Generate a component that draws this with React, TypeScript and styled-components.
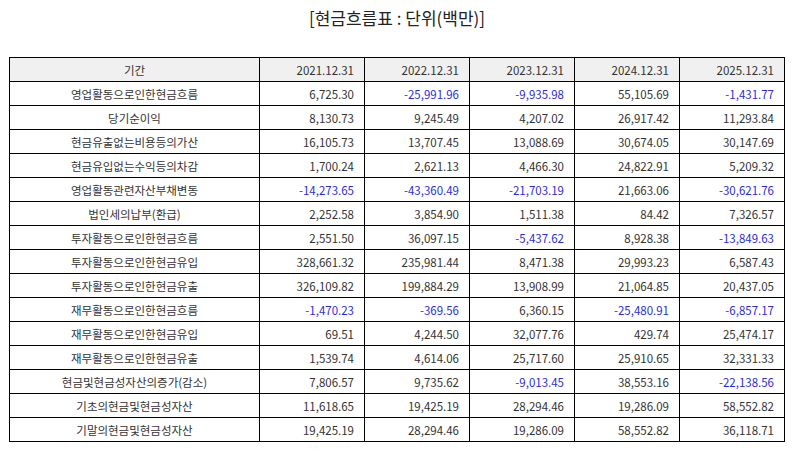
import { createGlobalStyle } from "styled-components";
import styled from "styled-components";

type Row = {
  label: string;
  values: number[];
};

const periods = ["2021.12.31", "2022.12.31", "2023.12.31", "2024.12.31", "2025.12.31"];

const rows: Row[] = [
  { label: "영업활동으로인한현금흐름", values: [6725.3, -25991.96, -9935.98, 55105.69, -1431.77] },
  { label: "당기순이익", values: [8130.73, 9245.49, 4207.02, 26917.42, 11293.84] },
  { label: "현금유출없는비용등의가산", values: [16105.73, 13707.45, 13088.69, 30674.05, 30147.69] },
  { label: "현금유입없는수익등의차감", values: [1700.24, 2621.13, 4466.3, 24822.91, 5209.32] },
  { label: "영업활동관련자산부채변동", values: [-14273.65, -43360.49, -21703.19, 21663.06, -30621.76] },
  { label: "법인세의납부(환급)", values: [2252.58, 3854.9, 1511.38, 84.42, 7326.57] },
  { label: "투자활동으로인한현금흐름", values: [2551.5, 36097.15, -5437.62, 8928.38, -13849.63] },
  { label: "투자활동으로인한현금유입", values: [328661.32, 235981.44, 8471.38, 29993.23, 6587.43] },
  { label: "투자활동으로인한현금유출", values: [326109.82, 199884.29, 13908.99, 21064.85, 20437.05] },
  { label: "재무활동으로인한현금흐름", values: [-1470.23, -369.56, 6360.15, -25480.91, -6857.17] },
  { label: "재무활동으로인한현금유입", values: [69.51, 4244.5, 32077.76, 429.74, 25474.17] },
  { label: "재무활동으로인한현금유출", values: [1539.74, 4614.06, 25717.6, 25910.65, 32331.33] },
  { label: "현금및현금성자산의증가(감소)", values: [7806.57, 9735.62, -9013.45, 38553.16, -22138.56] },
  { label: "기초의현금및현금성자산", values: [11618.65, 19425.19, 28294.46, 19286.09, 58552.82] },
  { label: "기말의현금및현금성자산", values: [19425.19, 28294.46, 19286.09, 58552.82, 36118.71] },
];

const format = (n: number) =>
  n.toLocaleString("en-US", { minimumFractionDigits: 2, maximumFractionDigits: 2 });

const GlobalStyle = createGlobalStyle`
  body {
    margin: 0;
    background: #ffffff;
    font-family: "Noto Sans CJK KR", "Noto Sans", sans-serif;
    color: #333333;
  }
`;

const Page = () => (
  <Wrapper>
    <Title>[현금흐름표 : 단위(백만)]</Title>
    <Table>
      <colgroup>
        <col style={{ width: 250 }} />
        {periods.map((p) => (
          <col key={p} style={{ width: 105 }} />
        ))}
      </colgroup>
      <thead>
        <tr>
          <HeadCell>기간</HeadCell>
          {periods.map((p) => (
            <HeadCell key={p} $num>
              {p}
            </HeadCell>
          ))}
        </tr>
      </thead>
      <tbody>
        {rows.map((row) => (
          <tr key={row.label}>
            <LabelCell>{row.label}</LabelCell>
            {row.values.map((v, i) => (
              <NumCell key={i} $negative={v < 0}>
                {format(v)}
              </NumCell>
            ))}
          </tr>
        ))}
      </tbody>
    </Table>
  </Wrapper>
);

const Wrapper = styled.div`
  display: flex;
  flex-direction: column;
  align-items: center;
  padding: 4px 10px 0 10px;
`;

const Title = styled.h1`
  margin: 0 0 25px 0;
  height: 28px;
  line-height: 28px;
  font-size: 17px;
  font-weight: 400;
  color: #222222;
`;

const Table = styled.table`
  width: 775px;
  border-collapse: collapse;
  table-layout: fixed;
  font-size: 11.5px;
`;

const HeadCell = styled.th<{ $num?: boolean }>`
  height: 23px;
  padding: 0 10px;
  border: 1px solid #000000;
  background: #f0f0f0;
  font-weight: 400;
  color: #333333;
  text-align: ${(p) => (p.$num ? "right" : "center")};
`;

const LabelCell = styled.td`
  height: 23px;
  padding: 0 8px;
  border: 1px solid #000000;
  text-align: center;
  color: #333333;
`;

const NumCell = styled.td<{ $negative: boolean }>`
  height: 23px;
  padding: 0 10px;
  border: 1px solid #000000;
  text-align: right;
  color: ${(p) => (p.$negative ? "#2d2ddb" : "#333333")};
`;

export default function App() {
  return (
    <>
      <GlobalStyle />
      <Page />
    </>
  );
}
